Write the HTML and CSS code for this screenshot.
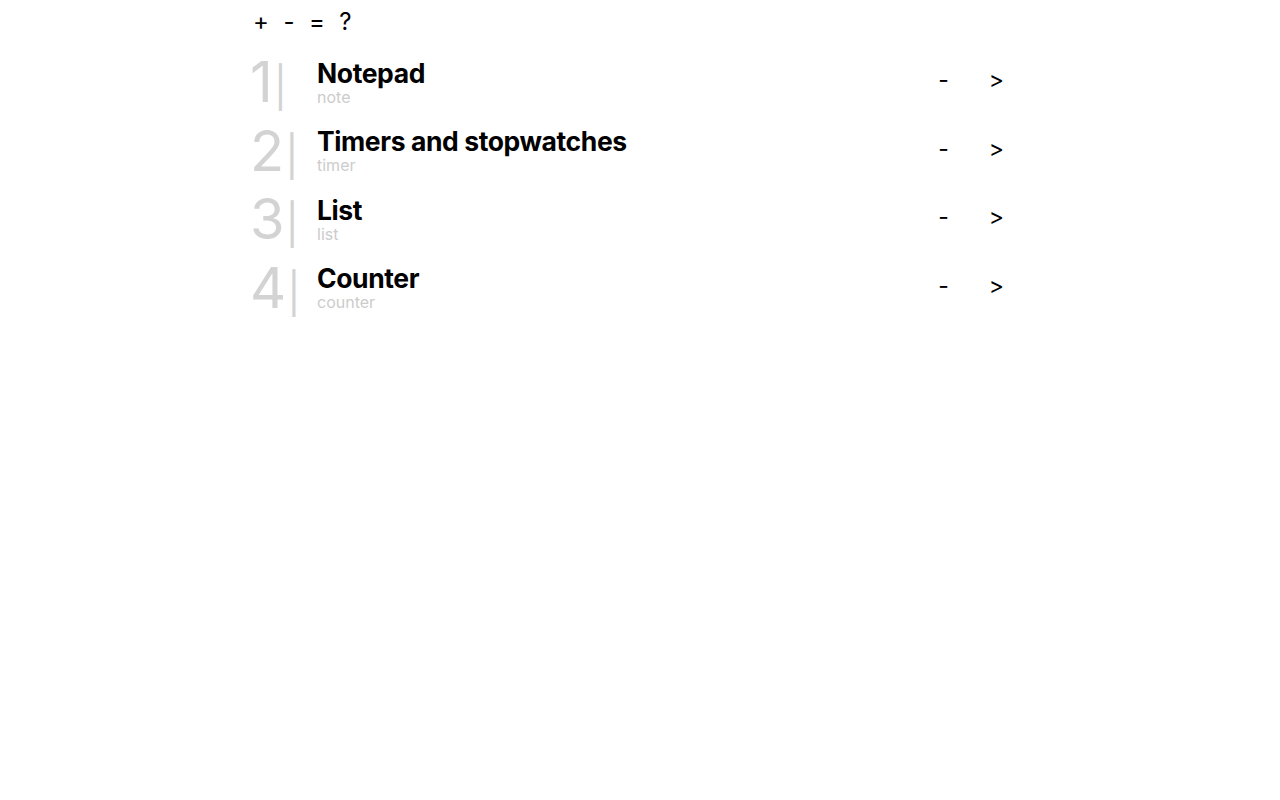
FILE: index.html
```html
<!DOCTYPE html>
<html>
<head>
<meta charset="utf-8">
<link rel="stylesheet" href="styles.css">
</head>
<body>
<div class="app">
  <div class="toolbar"><button class="tool">+</button> <button class="tool">-</button> <button class="tool">=</button> <button class="tool">?</button></div>
  <div class="list">
    <div class="row">
      <div class="num">1<span class="bar">|</span></div>
      <div class="info"><div class="title">Notepad</div><div class="sub">note</div></div>
      <div class="actions"><button class="act">-</button><button class="act">&gt;</button></div>
    </div>
    <div class="row">
      <div class="num">2<span class="bar">|</span></div>
      <div class="info"><div class="title">Timers and stopwatches</div><div class="sub">timer</div></div>
      <div class="actions"><button class="act">-</button><button class="act">&gt;</button></div>
    </div>
    <div class="row">
      <div class="num">3<span class="bar">|</span></div>
      <div class="info"><div class="title">List</div><div class="sub">list</div></div>
      <div class="actions"><button class="act">-</button><button class="act">&gt;</button></div>
    </div>
    <div class="row">
      <div class="num">4<span class="bar">|</span></div>
      <div class="info"><div class="title">Counter</div><div class="sub">counter</div></div>
      <div class="actions"><button class="act">-</button><button class="act">&gt;</button></div>
    </div>
  </div>
</div>
</body>
</html>
```
FILE: styles.css
```css
html, body {
  margin: 0;
  padding: 0;
  background: #fff;
}
body {
  font-family: Inter, "Noto Sans", sans-serif;
  color: #000;
}
.app {
  width: 760px;
  margin-left: 250px;
}
.toolbar {
  padding-top: 6px;
  height: 38px;
  margin-left: -2px;
}
.tool, .act {
  font-family: Inter, sans-serif;
  font-size: 24px;
  background: none;
  border: none;
  padding: 1px 5px;
  color: #000;
  cursor: pointer;
}
.act {
  font-size: 23px;
  padding: 1px 6px;
}
.list {
  margin-top: 4px;
}
.row {
  display: flex;
  align-items: center;
  height: 68.5px;
}
.num {
  width: 67px;
  padding-top: 6px;
  font-size: 56px;
  font-weight: 400;
  color: #d3d3d3;
  line-height: 68px;
  letter-spacing: -1px;
}
.bar {
  font-size: 40px;
  font-weight: 400;
  margin-left: 2px;
}
.info {
  flex: 1;
}
.title {
  font-size: 26.5px;
  font-weight: 700;
  line-height: 30px;
  letter-spacing: -0.4px;
}
.sub {
  font-size: 16px;
  color: #cccccc;
  line-height: 19px;
}
.actions {
  display: flex;
  gap: 28px;
  margin-top: -4px;
}
```
